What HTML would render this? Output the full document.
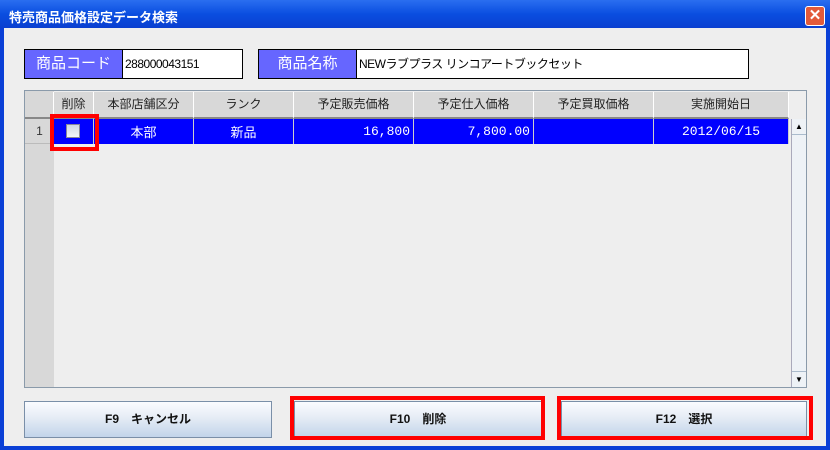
<!DOCTYPE html><html><head><meta charset="utf-8"><style>
*{box-sizing:border-box;margin:0;padding:0}
body{width:830px;height:450px;overflow:hidden;font-family:"Liberation Sans","Noto Sans CJK JP",sans-serif;font-size:12px;background:#0a3fd6;position:relative}
.a{position:absolute}
.win{left:4px;top:28px;width:822px;height:418px;background:#eeeeee}
.lbl{background:#6666ff;color:#fff;font-size:15px;text-align:center;line-height:28px;border:1px solid #000}
.fld{background:#fff;border:1px solid #000;line-height:28px;padding-left:2px;font-size:12px;letter-spacing:-0.5px}
.hd{top:92px;height:27px;background:#d8d8d8;border-right:1px solid #fff;border-bottom:2px solid #888;text-align:center;line-height:25px;color:#222}
.cell{top:119px;height:25px;background:#0000ff;color:#fff;border-right:1px solid #ccc;line-height:25px;font-family:"Liberation Mono","Noto Sans CJK JP",monospace;font-size:13px}
.btn{top:401px;height:37px;border:1px solid #7a8fa8;background:linear-gradient(#fafcff,#e8eef6 40%,#c2d4ea);text-align:center;line-height:35px;font-weight:bold;font-size:12px;color:#111}
.red{border:4px solid #f00}
</style></head><body>
<div class="a" style="left:0;top:0;width:830px;height:28px;background:linear-gradient(#2a6ef0,#0a4ee0 50%,#0a3fd0)"></div>
<div class="a" style="left:9px;top:7px;color:#fff;font-weight:bold;font-size:13px">特売商品価格設定データ検索</div>
<div class="a" style="left:805px;top:6px;width:20px;height:20px;background:#e25a3a;border:1px solid #fff;border-radius:3px;color:#fff;text-align:center;line-height:18px;font-weight:bold;font-size:15px">✕</div>
<div class="a win"></div>
<div class="a lbl" style="left:24px;top:49px;width:99px;height:30px">商品コード</div>
<div class="a fld" style="left:122px;top:49px;width:121px;height:30px">288000043151</div>
<div class="a lbl" style="left:258px;top:49px;width:99px;height:30px">商品名称</div>
<div class="a fld" style="left:356px;top:49px;width:393px;height:30px">NEWラブプラス リンコアートブックセット</div>
<div class="a" style="left:24px;top:90px;width:783px;height:298px;border:1px solid #8a9aaa;background:#eeeeee"></div>
<div class="a" style="left:25px;top:91px;width:29px;height:296px;background:#d8d8d8"></div>
<div class="a hd" style="left:25px;width:29px"></div>
<div class="a hd" style="left:54px;width:40px">削除</div>
<div class="a hd" style="left:94px;width:100px">本部店舗区分</div>
<div class="a hd" style="left:194px;width:100px">ランク</div>
<div class="a hd" style="left:294px;width:120px">予定販売価格</div>
<div class="a hd" style="left:414px;width:120px">予定仕入価格</div>
<div class="a hd" style="left:534px;width:120px">予定買取価格</div>
<div class="a hd" style="left:654px;width:135px">実施開始日</div>
<div class="a" style="left:25px;top:119px;width:29px;height:25px;line-height:25px;text-align:center;color:#333;border-bottom:1px solid #bbb">1</div>
<div class="a cell" style="left:54px;width:40px"><div class="a" style="left:12px;top:5px;width:14px;height:14px;background:linear-gradient(#cfd8e4,#f4f6f8);border:1px solid #889"></div></div>
<div class="a cell" style="left:94px;width:100px;text-align:center;font-family:'Noto Sans CJK JP',sans-serif">本部</div>
<div class="a cell" style="left:194px;width:100px;text-align:center;font-family:'Noto Sans CJK JP',sans-serif">新品</div>
<div class="a cell" style="left:294px;width:120px;text-align:right;padding-right:3px">16,800</div>
<div class="a cell" style="left:414px;width:120px;text-align:right;padding-right:3px">7,800.00</div>
<div class="a cell" style="left:534px;width:120px"></div>
<div class="a cell" style="left:654px;width:135px;text-align:center">2012/06/15</div>
<div class="a" style="left:791px;top:119px;width:15px;height:268px;background:#eef2f6;border-left:1px solid #aab"></div>
<div class="a" style="left:792px;top:119px;width:14px;height:16px;text-align:center;font-size:8px;line-height:16px;border-bottom:1px solid #abc">▲</div>
<div class="a" style="left:792px;top:371px;width:14px;height:16px;text-align:center;font-size:8px;line-height:16px;border-top:1px solid #abc">▼</div>
<div class="a red" style="left:50px;top:114px;width:49px;height:37px"></div>
<div class="a btn" style="left:24px;width:248px">F9　キャンセル</div>
<div class="a btn" style="left:294px;width:248px">F10　削除</div>
<div class="a btn" style="left:561px;width:246px">F12　選択</div>
<div class="a red" style="left:290px;top:396px;width:255px;height:44px"></div>
<div class="a red" style="left:557px;top:396px;width:256px;height:44px"></div>
</body></html>
